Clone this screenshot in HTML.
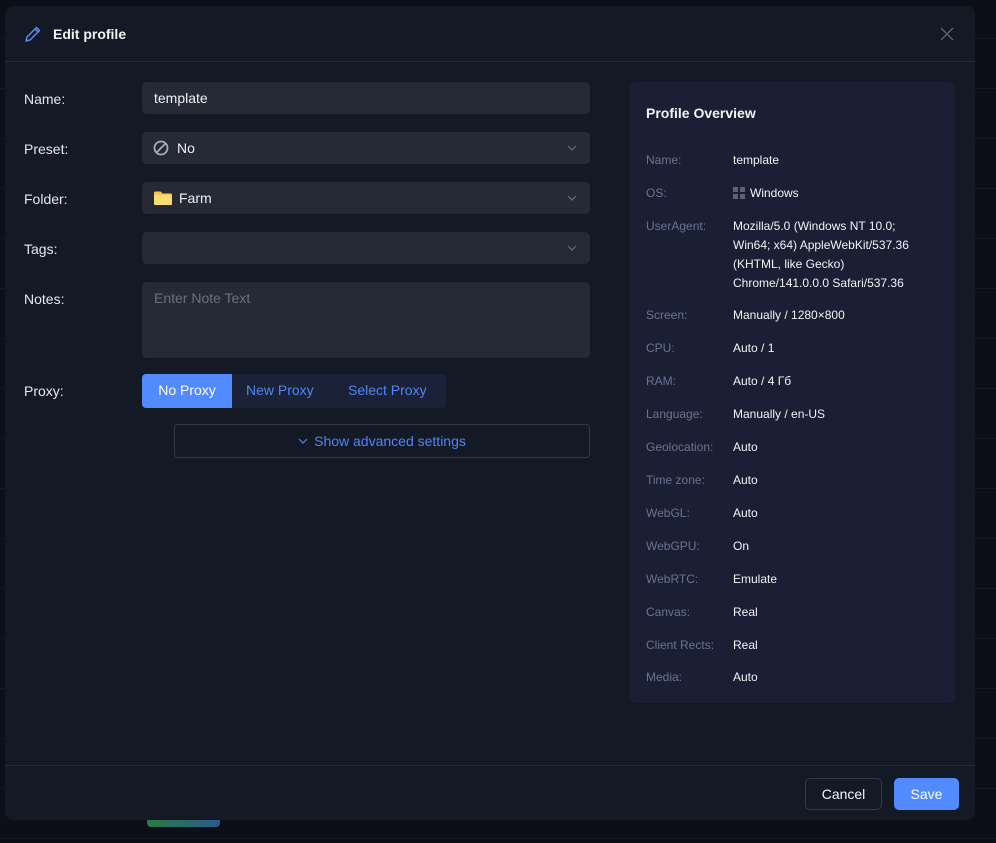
<!DOCTYPE html>
<html><head><meta charset="utf-8"><style>
*{box-sizing:border-box;margin:0;padding:0}
body{width:996px;height:843px;background:#0c0f17;font-family:"Liberation Sans",sans-serif;position:relative;overflow:hidden;color:#fff}
.line{position:absolute;left:0;right:0;height:1px;background:#141923}
.modal{position:absolute;left:5px;top:6px;width:970px;height:814px;background:#141926;border-radius:8px}
.hdr{position:absolute;left:0;top:0;right:0;height:56px;border-bottom:1px solid #262b38}
.title{position:absolute;left:48px;top:20px;font-size:14px;font-weight:bold;color:#f2f4f8}
.lbl{position:absolute;left:19px;font-size:14px;color:#e6e8ee}
.inp{position:absolute;left:137px;width:448px;height:32px;background:#262a37;border-radius:5px;font-size:14px;color:#eef0f4;padding:8px 12px}
.chev{position:absolute;right:12px;top:10px}
.panel{position:absolute;left:625px;top:76px;width:325px;height:621px;background:#1a1f33;border-radius:6px}
.pt{position:absolute;left:16px;top:23px;font-size:14px;font-weight:bold;color:#f2f4f8}
.k{position:absolute;left:16px;font-size:12px;color:#6a7391}
.v{position:absolute;left:103px;font-size:12px;color:#f2f4f8;line-height:19px}
.ftr{position:absolute;left:0;right:0;top:759px;border-top:1px solid #262b38}
.btn{position:absolute;top:772px;height:32px;border-radius:5px;font-size:14px;text-align:center;line-height:30px}
</style></head><body>
<div class="line" style="top:38px"></div><div class="line" style="top:88px"></div><div class="line" style="top:138px"></div><div class="line" style="top:188px"></div><div class="line" style="top:238px"></div><div class="line" style="top:288px"></div><div class="line" style="top:338px"></div><div class="line" style="top:388px"></div><div class="line" style="top:438px"></div><div class="line" style="top:488px"></div><div class="line" style="top:538px"></div><div class="line" style="top:588px"></div><div class="line" style="top:638px"></div><div class="line" style="top:688px"></div><div class="line" style="top:738px"></div><div class="line" style="top:788px"></div><div class="line" style="top:838px"></div>
<div style="position:absolute;left:147px;top:810px;width:73px;height:17px;border-radius:4px;background:linear-gradient(90deg,#2a7a45,#2b5a8a)"></div>
<div class="modal">
<div class="hdr">
<svg style="position:absolute;left:19px;top:19px" width="18" height="18" viewBox="0 0 18 18" fill="none" stroke="#5a8dee" stroke-width="1.5" stroke-linejoin="round"><path d="M12.5 2.5l3 3L6 15l-4 1 1-4z"/><path d="M11 4l3 3"/></svg>
<div class="title">Edit profile</div>
<svg style="position:absolute;left:935px;top:21px" width="14" height="14" viewBox="0 0 14 14" stroke="#5d6373" stroke-width="1.3"><path d="M1 1l12 12M13 1L1 13"/></svg>
</div>
<div class="lbl" style="top:85px">Name:</div>
<div class="inp" style="top:76px">template</div>
<div class="lbl" style="top:135px">Preset:</div>
<div class="inp" style="top:126px;padding-left:35px"><svg style="position:absolute;left:11px;top:8px" width="16" height="16" viewBox="0 0 16 16" fill="none" stroke="#a9adb8" stroke-width="1.8"><circle cx="8" cy="8" r="6.5"/><path d="M3.5 12.5l9-9"/></svg>No<svg class="chev" width="12" height="12" viewBox="0 0 12 12" fill="none" stroke="#676c7a" stroke-width="1.2"><path d="M2 4l4 4 4-4"/></svg></div>
<div class="lbl" style="top:185px">Folder:</div>
<div class="inp" style="top:176px;padding-left:37px"><svg style="position:absolute;left:12px;top:9px" width="18" height="14" viewBox="0 0 18 14"><path d="M0 2a1.5 1.5 0 0 1 1.5-1.5h5l2 2h8A1.5 1.5 0 0 1 18 4v8.5a1.5 1.5 0 0 1-1.5 1.5h-15A1.5 1.5 0 0 1 0 12.5z" fill="#f5c84c"/><rect x="0" y="4" width="18" height="10" rx="1.5" fill="#fbdc72"/></svg>Farm<svg class="chev" width="12" height="12" viewBox="0 0 12 12" fill="none" stroke="#676c7a" stroke-width="1.2"><path d="M2 4l4 4 4-4"/></svg></div>
<div class="lbl" style="top:235px">Tags:</div>
<div class="inp" style="top:226px"><svg class="chev" width="12" height="12" viewBox="0 0 12 12" fill="none" stroke="#676c7a" stroke-width="1.2"><path d="M2 4l4 4 4-4"/></svg></div>
<div class="lbl" style="top:285px">Notes:</div>
<div class="inp" style="top:276px;height:76px;color:#6b7080">Enter Note Text</div>
<div class="lbl" style="top:377px">Proxy:</div>
<div style="position:absolute;left:137px;top:368px;width:304px;height:34px;background:#1b2137;border-radius:4px;font-size:14px">
<div style="position:absolute;left:0;top:0;width:90px;height:34px;background:#528bff;border-radius:4px 0 0 4px;color:#fff;text-align:center;line-height:33px">No Proxy</div>
<div style="position:absolute;left:104px;top:0;line-height:33px;color:#4e86f5">New Proxy</div>
<div style="position:absolute;left:206px;top:0;line-height:33px;color:#4e86f5">Select Proxy</div>
</div>
<div style="position:absolute;left:169px;top:418px;width:416px;height:34px;border:1px solid #323847;border-radius:4px;text-align:center;line-height:32px;font-size:14px;color:#4e86f5"><svg width="10" height="10" viewBox="0 0 10 10" fill="none" stroke="#4e86f5" stroke-width="1.2" style="margin-right:6px"><path d="M1 3l4 4 4-4"/></svg>Show advanced settings</div>
<div class="panel">
<div class="pt">Profile Overview</div>
<div class="k" style="top:71px">Name:</div><div class="v" style="top:69px">template</div>
<div class="k" style="top:104px">OS:</div><div class="v" style="top:102px"><span style="display:inline-block;width:12px;height:12px;vertical-align:-2px;margin-right:5px;background:linear-gradient(#5d6375,#5d6375) 0 0/5px 5px no-repeat,linear-gradient(#5d6375,#5d6375) 7px 0/5px 5px no-repeat,linear-gradient(#5d6375,#5d6375) 0 7px/5px 5px no-repeat,linear-gradient(#5d6375,#5d6375) 7px 7px/5px 5px no-repeat"></span>Windows</div>
<div class="k" style="top:137px">UserAgent:</div><div class="v" style="top:135px;width:190px">Mozilla/5.0 (Windows NT 10.0; Win64; x64) AppleWebKit/537.36 (KHTML, like Gecko) Chrome/141.0.0.0 Safari/537.36</div>
<div class="k" style="top:226px">Screen:</div><div class="v" style="top:224px">Manually / 1280×800</div>
<div class="k" style="top:259px">CPU:</div><div class="v" style="top:257px">Auto / 1</div>
<div class="k" style="top:292px">RAM:</div><div class="v" style="top:290px">Auto / 4 Гб</div>
<div class="k" style="top:325px">Language:</div><div class="v" style="top:323px">Manually / en-US</div>
<div class="k" style="top:358px">Geolocation:</div><div class="v" style="top:356px">Auto</div>
<div class="k" style="top:391px">Time zone:</div><div class="v" style="top:389px">Auto</div>
<div class="k" style="top:424px">WebGL:</div><div class="v" style="top:422px">Auto</div>
<div class="k" style="top:457px">WebGPU:</div><div class="v" style="top:455px">On</div>
<div class="k" style="top:490px">WebRTC:</div><div class="v" style="top:488px">Emulate</div>
<div class="k" style="top:523px">Canvas:</div><div class="v" style="top:521px">Real</div>
<div class="k" style="top:556px">Client Rects:</div><div class="v" style="top:554px">Real</div>
<div class="k" style="top:588px">Media:</div><div class="v" style="top:586px">Auto</div>
</div>
<div class="ftr"></div>
<div class="btn" style="left:800px;width:77px;border:1px solid #343a48;color:#f2f4f8">Cancel</div>
<div class="btn" style="left:889px;width:65px;background:#528bff;color:#fff;line-height:32px">Save</div>
</div>
</body></html>
